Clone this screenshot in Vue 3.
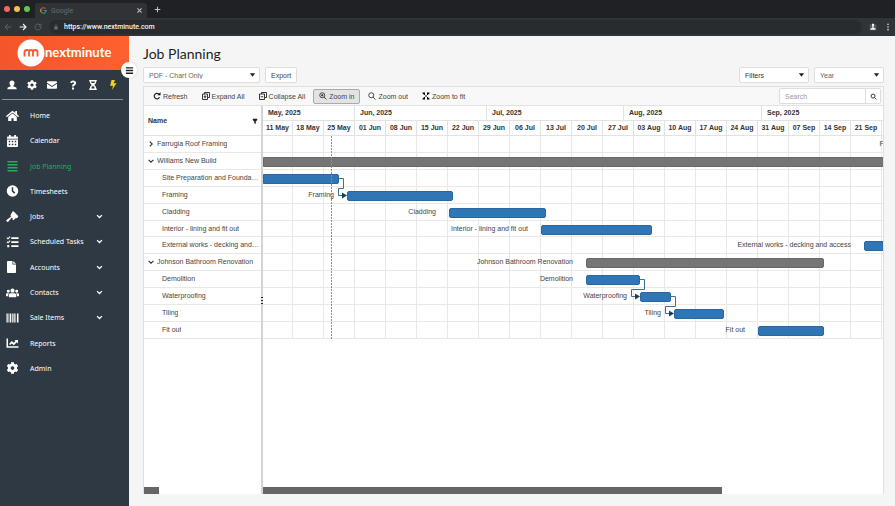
<script setup>
import { ref } from 'vue'

const cog = 'M487.4 315.7l-42.6-24.6c4.3-23.2 4.3-47 0-70.2l42.6-24.6c4.9-2.8 7.1-8.6 5.5-14-11.1-35.6-30-67.8-54.7-94.6-3.8-4.1-10-5.1-14.8-2.3L380.8 110c-17.9-15.4-38.5-27.3-60.8-35.1V25.8c0-5.6-3.9-10.5-9.4-11.7-36.7-8.2-74.3-7.8-109.2 0-5.5 1.2-9.4 6.1-9.4 11.7V75c-22.2 7.9-42.8 19.8-60.8 35.1L88.7 85.5c-4.9-2.8-11-1.9-14.8 2.3-24.7 26.7-43.6 58.9-54.7 94.6-1.7 5.4.6 11.2 5.5 14L67.3 221c-4.3 23.2-4.3 47 0 70.2l-42.6 24.6c-4.9 2.8-7.1 8.6-5.5 14 11.1 35.6 30 67.8 54.7 94.6 3.8 4.1 10 5.1 14.8 2.3l42.6-24.6c17.9 15.4 38.5 27.3 60.8 35.1v49.2c0 5.6 3.9 10.5 9.4 11.7 36.7 8.2 74.3 7.8 109.2 0 5.5-1.2 9.4-6.1 9.4-11.7v-49.2c22.2-7.9 42.8-19.8 60.8-35.1l42.6 24.6c4.9 2.8 11 1.9 14.8-2.3 24.7-26.7 43.6-58.9 54.7-94.6 1.5-5.5-.7-11.3-5.6-14.1zM256 336c-44.1 0-80-35.9-80-80s35.9-80 80-80 80 35.9 80 80-35.9 80-80 80z'

const quick = [
  { label: 'Profile', box: '0 0 24 24', d: 'M12 1c3.600 0 6 2.500 6 6.200 0 2.600-1.200 5.200-3 6.500v1.300l6 2.200c1.500.6 2 1.500 2 3V22H1v-1.800c0-1.500.5-2.400 2-3L9 15v-1.300c-1.800-1.300-3-3.900-3-6.500C6 3.500 8.400 1 12 1z' },
  { label: 'Settings', box: '0 0 512 512', d: cog },
  { label: 'Messages', box: '0 0 24 24', d: 'M2 3h20c1 0 2 .8 2 2v1.500l-12 8-12-8V5c0-1.200 1-2 2-2zM0 9l12 8 12-8v10c0 1.200-1 2-2 2H2c-1 0-2-.8-2-2z' },
  { label: 'Help', box: '0 0 24 24', d: 'M5 6.500C6.500 2.800 9 1 12.300 1c4.200 0 7.200 2.500 7.200 6.200 0 3-1.600 4.500-3.600 5.800-1.400.9-1.700 1.300-1.700 2.700H9.700c-.2-3.300.7-4.700 3-6.200 1.500-1 2-1.400 2-2.400 0-1.200-1-1.900-2.400-1.900-1.500 0-2.400.8-3.500 2.700zM9.500 18h5v5h-5z' },
  { label: 'Pending', box: '0 0 24 24', d: 'M3 0h18v3.500h-1.500c0 4-1.500 6.500-4.500 8.500 3 2 4.500 4.500 4.500 8.500H21V24H3v-3.500h1.500c0-4 1.500-6.500 4.500-8.500-3-2-4.500-4.500-4.500-8.500H3zM7.500 3.500l1 3.500h7l1-3.500zM8 20.500h8C15.500 17 14 15 12 14c-2 1-3.500 3-4 6.500z' },
  { label: 'Shortcuts', box: '0 0 24 24', d: 'M8.500 0h8L14 8h6.500L9.500 24l2.500-10.500H5z', hot: true }
]

const nav = [
  { label: 'Home', box: '0 0 576 512', d: 'M280.37 148.26L96 300.11V464a16 16 0 0 0 16 16l112.06-.29a16 16 0 0 0 15.92-16V368a16 16 0 0 1 16-16h64a16 16 0 0 1 16 16v95.64a16 16 0 0 0 16 16.050L464 480a16 16 0 0 0 16-16V300L295.670 148.260a12.190 12.190 0 0 0-15.300 0zM571.600 251.470L488 182.560V44.050a12 12 0 0 0-12-12h-56a12 12 0 0 0-12 12v72.610L318.470 43a48 48 0 0 0-61 0L4.340 251.470a12 12 0 0 0-1.600 16.900l25.500 31A12 12 0 0 0 45.150 301l235.220-193.740a12.190 12.190 0 0 1 15.300 0L530.900 301a12 12 0 0 0 16.900-1.600l25.500-31a12 12 0 0 0-1.700-16.930z' },
  { label: 'Calendar', box: '0 0 24 24', d: 'M5 0h3.500v3h7V0H19v3h2c1 0 2 1 2 2v2.500H1V5c0-1 1-2 2-2h2zM1 9h22v13c0 1-1 2-2 2H3c-1 0-2-1-2-2zM4.500 11.500v3h3v-3zM10.500 11.500v3h3v-3zM16.500 11.500v3h3v-3zM4.500 17.500v3h3v-3zM10.500 17.500v3h3v-3zM16.500 17.500v3h3v-3z' },
  { label: 'Job Planning', box: '0 0 24 24', d: 'M2 2h20v3H2zM2 8h20v3H2zM2 14h20v3H2zM2 20h20v3H2z', active: true },
  { label: 'Timesheets', box: '0 0 24 24', d: 'M12 .5a11.500 11.500 0 1 0 0 23 11.500 11.500 0 0 0 0-23zM10.500 4.500h3v7l4 3.500-2 2.500-5-4.500z' },
  { label: 'Jobs', box: '0 0 24 24', d: 'M12.500 .5L14.500 1l8.500 8.500.5 2-3 3-2-.5-4.500 4.500-2-1.500.5-2-2-2-7 8.500c-1.500 1.500-5-1.500-3.500-3.500L9.500 11 8 9.500l.5-2.500z', sub: true },
  { label: 'Scheduled Tasks', box: '0 0 24 24', d: 'M9.500 2.500H24v3.500H9.500zM9.500 10.500H24V14H9.500zM9.500 18.500H24V22H9.500zM0 4l1.500-1.500L3 4l3.500-3.500L8 2 3 7zM0 12l1.500-1.500L3 12l3.500-3.500L8 10l-5 5zM1.500 18h4v4.500h-4z', sub: true },
  { label: 'Accounts', box: '0 0 24 24', d: 'M1 1.500C1 .7 1.700 0 2.500 0H12v7h7v15.500c0 .8-.7 1.500-1.500 1.500h-15c-.8 0-1.500-.7-1.500-1.500zM13.500 0l5.500 5.500h-5.500z', sub: true },
  { label: 'Contacts', box: '0 0 28 22', d: 'M14 1.500a4.500 4.500 0 1 1 0 9 4.500 4.500 0 0 1 0-9zM5 4a3.200 3.200 0 1 1 0 6.400A3.200 3.200 0 0 1 5 4zM23 4a3.200 3.200 0 1 1 0 6.400A3.200 3.200 0 0 1 23 4zM9.500 11.500h9c2.200 0 3.500 2 3.500 4V20H6v-4.500c0-2 1.300-4 3.500-4zM2.500 11.500h4C5 13 4.500 14.500 4.500 18H0v-4c0-1.500 1-2.500 2.500-2.500zM25.500 11.500h-4c1.500 1.500 2 3 2 6.500H28v-4c0-1.500-1-2.500-2.500-2.500z', sub: true },
  { label: 'Sale Items', box: '0 0 24 24', d: 'M0 3h2.500v18H0zM4 3h1.200v18H4zM6.500 3h3v18h-3zM11 3h1.500v18H11zM14 3h2.500v18H14zM18 3h1.200v18H18zM21 3h3v18h-3z', sub: true },
  { label: 'Reports', box: '0 0 24 24', d: 'M0 3h3v15.500h21v3H0zM5 14l5.500-6 4 3.500L18 8l-2-2h7v7l-2.500-2.500-6 6-4-3.500L7 16z' },
  { label: 'Admin', box: '0 0 512 512', d: cog }
]

const months = [
  { label: 'May, 2025', width: 92 },
  { label: 'Jun, 2025', width: 132 },
  { label: 'Jul, 2025', width: 137 },
  { label: 'Aug, 2025', width: 138 },
  { label: 'Sep, 2025', width: 136 }
]
const weeks = ['11 May', '18 May', '25 May', '01 Jun', '08 Jun', '15 Jun', '22 Jun', '29 Jun', '06 Jul', '13 Jul', '20 Jul', '27 Jul', '03 Aug', '10 Aug', '17 Aug', '24 Aug', '31 Aug', '07 Sep', '14 Sep', '21 Sep']

// start and width are measured from the left edge of the timeline
const rows = [
  { name: 'Farrugia Roof Framing', group: 'closed', start: 700, width: 200 },
  { name: 'Williams New Build', group: 'open', start: 0, width: 900 },
  { name: 'Site Preparation and Foundations', start: 0, width: 76 },
  { name: 'Framing', start: 84, width: 106, from: 76 },
  { name: 'Cladding', start: 186, width: 97 },
  { name: 'Interior - lining and fit out', start: 278, width: 111 },
  { name: 'External works - decking and access', start: 601, width: 110 },
  { name: 'Johnson Bathroom Renovation', group: 'open', start: 323, width: 238 },
  { name: 'Demolition', start: 323, width: 54 },
  { name: 'Waterproofing', start: 377, width: 31, from: 377 },
  { name: 'Tiling', start: 411, width: 50, from: 408 },
  { name: 'Fit out', start: 495, width: 66 }
]

// elbow line from the end of the previous row's bar to the start of this one
const link = r => `M${r.from} -8.500h4.500v10H${r.start - 8.5}v7h5`
const arrow = r => `M${r.start - 5} 5.500l5 3-5 3z`

const exportType = ref('PDF - Chart Only')
const filter = ref('Filters')
const range = ref('Year')
const search = ref('')
const url = ref('https://www.nextminute.com')
</script>

<template>
  <div class="window">
    <header class="browser">
      <div class="tabs">
        <div class="lights"><i class="red"></i><i class="yellow"></i><i class="green"></i></div>
        <div class="tab">
          <svg class="g" viewBox="0 0 24 24" fill="none" stroke-width="4">
            <path d="M19 5.500A9.500 9.500 0 0 0 4 7.200" stroke="#d9473a" />
            <path d="M4 7.200a9.500 9.500 0 0 0 0 9.600" stroke="#dba51c" />
            <path d="M4 16.800a9.500 9.500 0 0 0 14.500 2" stroke="#37964c" />
            <path d="M18.500 18.800c2-1.800 3-4 3-6.800H12" stroke="#4478d8" />
          </svg>
          <span>Google</span>
          <button class="plain close" aria-label="Close tab"><svg viewBox="0 0 10 10"><path d="M2 2l6 6M8 2l-6 6" stroke="#b9bbbe" stroke-width="1.500" /></svg></button>
        </div>
        <button class="plain add" aria-label="New tab"><svg viewBox="0 0 10 10"><path d="M5 1v8M1 5h8" stroke="#c3c5c8" stroke-width="1.500" /></svg></button>
      </div>
      <div class="address">
        <button class="plain" aria-label="Back"><svg viewBox="0 0 12 12" fill="none" stroke="#62666a" stroke-width="1.400"><path d="M11 6H2M6 1.500L1.500 6 6 10.500" /></svg></button>
        <button class="plain" aria-label="Forward"><svg viewBox="0 0 12 12" fill="none" stroke="#f1f2f3" stroke-width="1.700"><path d="M1 6h9M6 1.500l4.500 4.500L6 10.500" /></svg></button>
        <button class="plain" aria-label="Reload"><svg viewBox="0 0 12 12" fill="none" stroke="#62666a" stroke-width="1.400"><path d="M10.500 6A4.500 4.500 0 1 1 9 2.700M10.500 1v3.500H7" /></svg></button>
        <div class="omnibox">
          <svg viewBox="0 0 12 12"><path d="M2.500 5h7v6h-7z" fill="#696d70" /><path d="M4 5V3.500a2 2 0 0 1 4 0V5" fill="none" stroke="#696d70" stroke-width="1.200" /></svg>
          <input v-model="url" aria-label="Address" />
        </div>
        <button class="plain" aria-label="Account"><svg viewBox="0 0 12 12"><path d="M1 2h10v9H1z" fill="#55595c" /><path d="M4.500 1h3v3.500H7V7l3 1.500V10H2V8.500L5 7V4.500h-.5z" fill="#f2f2f2" /></svg></button>
        <button class="plain" aria-label="Browser menu"><svg viewBox="0 0 12 12" fill="#d8d9da"><circle cx="6" cy="2" r="1.200" /><circle cx="6" cy="6" r="1.200" /><circle cx="6" cy="10" r="1.200" /></svg></button>
      </div>
    </header>

    <div class="body">
      <aside class="sidebar">
        <a class="brand" href="#">
          <svg viewBox="0 0 28 28">
            <circle cx="14" cy="14" r="13.500" fill="#fff" />
            <path d="M7.500 17.500v-4q0-2.500 2.500-2.500h1.500M12 17.500V13q0-2 2-2t2 2v4.500M16 13q0-2 2.200-2t2.300 2v4.500" fill="none" stroke="#f8592b" stroke-width="1.800" />
          </svg>
          <span>nextminute</span>
        </a>
        <div class="quick">
          <button v-for="q in quick" :key="q.label" class="plain" :class="{ hot: q.hot }" :aria-label="q.label">
            <svg :viewBox="q.box"><path :d="q.d" fill="currentColor" fill-rule="evenodd" /></svg>
          </button>
        </div>
        <nav>
          <a v-for="n in nav" :key="n.label" href="#" :class="{ active: n.active }">
            <svg class="icon" :viewBox="n.box"><path :d="n.d" fill="currentColor" fill-rule="evenodd" /></svg>
            <span>{{ n.label }}</span>
            <svg v-if="n.sub" class="chev" viewBox="0 0 10 10"><path d="M1.500 3L5 6.500 8.500 3" fill="none" stroke="currentColor" stroke-width="1.800" /></svg>
          </a>
        </nav>
        <button class="plain toggle" aria-label="Toggle menu"><svg viewBox="0 0 10 10"><path d="M1 2h8M1 5h8M1 8h8" stroke="#222" stroke-width="1.500" /></svg></button>
      </aside>

      <main>
        <h1>Job Planning</h1>
        <div class="controls">
          <div class="select wide">
            <select v-model="exportType" aria-label="Export type"><option>PDF - Chart Only</option></select>
            <svg viewBox="0 0 8 8"><path d="M1 2h6L4 6z" /></svg>
          </div>
          <button class="export">Export</button>
          <div class="select push dark">
            <select v-model="filter" aria-label="Filters"><option>Filters</option></select>
            <svg viewBox="0 0 8 8"><path d="M1 2h6L4 6z" /></svg>
          </div>
          <div class="select">
            <select v-model="range" aria-label="Range"><option>Year</option></select>
            <svg viewBox="0 0 8 8"><path d="M1 2h6L4 6z" /></svg>
          </div>
        </div>

        <section class="panel">
          <div class="toolbar">
            <button><svg viewBox="0 0 16 16"><path d="M13 10.500A5.500 5.500 0 1 1 11.500 4" fill="none" stroke="currentColor" stroke-width="2.400" /><path d="M9 6.500h6V.5z" /></svg>Refresh</button>
            <button><svg viewBox="0 0 16 16" fill="none" stroke="currentColor" stroke-width="1.800"><path d="M5 4V1h10v10h-3M1 4h10v11H1zM6 6.500v6M3.500 9.500h5" /></svg>Expand All</button>
            <button><svg viewBox="0 0 16 16" fill="none" stroke="currentColor" stroke-width="1.800"><path d="M5 4V1h10v10h-3M1 4h10v11H1zM3.500 9.500h5" /></svg>Collapse All</button>
            <button class="on"><svg viewBox="0 0 16 16" fill="none" stroke="currentColor" stroke-width="1.600"><circle cx="6.500" cy="6.500" r="5" /><path d="M10 10l5 5M4 6.500h5M6.500 4v5" /></svg>Zoom in</button>
            <button><svg viewBox="0 0 16 16" fill="none" stroke="currentColor" stroke-width="1.600"><circle cx="6.500" cy="6.500" r="5" /><path d="M10 10l5 5" /></svg>Zoom out</button>
            <button><svg viewBox="0 0 16 16"><path d="M1 1h5v5H4.500L1 2.500zM15 1h-5v5h1.500L15 2.500zM1 15h5v-5H4.500L1 13.500zM15 15h-5v-5h1.500l3.500 3.500z" /><path d="M5 5l6 6M11 5l-6 6" stroke="currentColor" stroke-width="1.200" /></svg>Zoom to fit</button>
            <div class="search">
              <input v-model="search" type="text" placeholder="Search" aria-label="Search" />
              <button aria-label="Run search"><svg viewBox="0 0 16 16" fill="none" stroke="currentColor" stroke-width="2"><circle cx="7" cy="7" r="4.500" /><path d="M10.500 10.500l4 4" /></svg></button>
            </div>
          </div>

          <div class="gantt">
            <div class="tree">
              <div class="treehead">
                <span>Name</span>
                <svg viewBox="0 0 8 8"><path d="M1 1h6v1.500L5 4.500V8L3 7V4.500L1 2.500z" /></svg>
              </div>
              <div class="rows">
                <div v-for="r in rows" :key="r.name" class="row" :class="{ child: !r.group }">
                  <svg v-if="r.group" viewBox="0 0 10 10" fill="none" stroke="#333" stroke-width="1.400"><path :d="r.group === 'open' ? 'M2 3.500l3 3 3-3' : 'M3.500 2l3 3-3 3'" /></svg>
                  <span>{{ r.name }}</span>
                </div>
              </div>
              <div class="scroll"><i class="short"></i></div>
            </div>
            <div class="splitter"><i></i></div>
            <div class="chart">
              <div class="months"><span v-for="m in months" :key="m.label" :style="{ width: m.width + 'px' }">{{ m.label }}</span></div>
              <div class="weeks"><span v-for="w in weeks" :key="w">{{ w }}</span></div>
              <div class="rows lanes">
                <div v-for="r in rows" :key="r.name" class="lane">
                  <span v-if="r.start" class="label" :style="{ width: r.start - 13 + 'px' }">{{ r.name }}</span>
                  <i class="bar" :class="{ summary: r.group, first: !r.start }" :style="{ left: r.start + 'px', width: r.width + 'px' }"></i>
                  <svg v-if="r.from" class="link"><path :d="link(r)" fill="none" stroke="#3c7191" /><path :d="arrow(r)" fill="#163f5e" /></svg>
                </div>
                <i class="today"></i>
              </div>
              <div class="scroll"><i class="long"></i></div>
            </div>
          </div>
        </section>
      </main>
    </div>
  </div>
</template>

<style>
body { margin: 0; background: #f5f5f5; }
</style>

<style scoped>
* { box-sizing: border-box; }
.window { min-height: 100vh; display: flex; flex-direction: column; font-family: "Liberation Sans", Arial, sans-serif; font-size: 7px; color: #444; overflow: hidden; }
button, input, select { font: inherit; color: inherit; margin: 0; padding: 0; outline: 0; }
svg { display: block; flex: none; }
.plain { border: 0; background: none; display: flex; align-items: center; justify-content: center; }

.browser { font-family: Roboto, sans-serif; }
.tabs { height: 18px; background: #202124; display: flex; align-items: stretch; }
.lights { width: 35px; display: flex; align-items: center; gap: 4px; padding-left: 4px; }
.lights i { width: 6px; height: 6px; border-radius: 50%; }
.red { background: #ed6a5e; }
.yellow { background: #f4bf4f; }
.green { background: #61c554; }
.tab { width: 112px; margin-top: 3px; padding: 0 4px 0 5px; background: #303336; border-radius: 3px 3px 0 0; display: flex; align-items: center; gap: 4px; color: #676a6e; }
.g { width: 7px; height: 7px; }
.close { margin-left: auto; }
.close svg { width: 7px; height: 7px; }
.add { width: 20px; }
.add svg { width: 7px; height: 7px; }
.address { height: 18px; background: #303437; display: flex; align-items: center; gap: 7px; padding: 0 3px 0 4px; }
.address svg { width: 8px; height: 8px; }
.omnibox { flex: 1; height: 14px; padding-left: 4px; border-radius: 7px; background: #282c2f; display: flex; align-items: center; gap: 5px; }
.omnibox svg { width: 6px; height: 6px; }
.omnibox input { flex: 1; border: 0; background: none; color: #f4f4f4; font-weight: 500; }

.body { flex: 1; display: flex; }
.sidebar { position: relative; width: 129px; flex: none; background: #2f3944; color: #fff; font-family: "Noto Sans", sans-serif; }
.brand { height: 34px; padding-left: 17px; background: linear-gradient(90deg, #f5552a, #ff6030); color: #fff; text-decoration: none; display: flex; align-items: center; font: 700 13px Lato, sans-serif; }
.brand svg { width: 28px; height: 28px; }
.brand span { padding-bottom: 2px; }
.quick { height: 30px; margin: 0 6px 0 2px; border-bottom: 1px solid #8b949d; display: grid; grid-template-columns: repeat(6, 1fr); }
.quick svg { width: 10px; height: 10px; }
.quick .hot { color: #f7cf1d; }
nav { margin-top: 3px; min-height: 278px; display: grid; grid-auto-rows: 1fr; }
nav a { display: flex; align-items: center; padding: 0 26px 0 6px; color: #fff; text-decoration: none; }
nav .active { color: #1fb253; }
.icon { width: 13px; height: 12px; margin-right: 11px; }
.chev { width: 7px; height: 7px; margin-left: auto; }
.toggle { position: absolute; right: -8px; top: 26px; width: 16px; height: 16px; border-radius: 50%; background: #fff; box-shadow: 0 0 2px #0003; }
.toggle svg { width: 9px; height: 9px; }

main { flex: 1; min-width: 0; display: flex; flex-direction: column; padding: 9px 11px 12px 14px; background: #f5f5f5; }
h1 { margin: 0; font: 400 14px/18px Lato, sans-serif; color: #1f1f1f; }
.controls { display: flex; align-items: center; gap: 5px; padding: 4px 0 3px; }
.select { position: relative; width: 70px; height: 16px; color: #666; }
.select.wide { width: 117px; }
.select.push { margin-left: auto; }
.select.dark { color: #333; }
.select select { appearance: none; width: 100%; height: 100%; padding: 0 5px; border: 1px solid #ddd; border-radius: 2px; background: #fff; }
.select svg { position: absolute; right: 4px; top: 4px; width: 7px; height: 8px; fill: #222; pointer-events: none; }
.export { height: 16px; padding: 0 5px; border: 1px solid #ddd; border-radius: 2px; background: #fff; }

.panel { flex: 1; display: flex; flex-direction: column; border: 1px solid #e0e0e0; border-bottom: 0; }
.toolbar { height: 19px; padding: 1px 2px 1px 3px; display: flex; align-items: center; gap: 2px; background: #f8f8f8; border-bottom: 1px solid #e2e2e2; }
.toolbar > button { height: 15px; padding: 0 5px; border: 1px solid transparent; border-radius: 2px; background: none; display: flex; align-items: center; gap: 2px; white-space: nowrap; }
.toolbar svg { width: 8px; height: 8px; color: #222; }
.toolbar > .on { background: #e3e3e3; border-color: #aaa; }
.search { margin-left: auto; width: 102px; height: 16px; display: flex; border: 1px solid #ddd; border-radius: 2px; background: #fff; }
.search input { flex: 1; min-width: 0; border: 0; padding: 0 5px; background: none; }
.search input::placeholder { color: #999; opacity: 1; }
.search button { width: 15px; border: 0; border-left: 1px solid #ddd; background: none; display: flex; align-items: center; justify-content: center; }
.search svg { width: 7px; height: 7px; }

.gantt { flex: 1; display: flex; background: #fff; }
.tree { width: 117px; flex: none; display: flex; flex-direction: column; }
.treehead { height: 30px; padding: 0 3px 0 4px; border-bottom: 1px solid #e2e2e2; display: flex; align-items: center; justify-content: space-between; font-weight: 700; color: #333; }
.treehead svg { width: 6px; height: 6px; fill: #222; }
.rows { height: 203px; display: grid; grid-template-rows: repeat(12, 1fr); line-height: 12px; }
.row { display: flex; align-items: center; gap: 2px; min-width: 0; min-height: 0; padding: 0 1px 0 3px; border-bottom: 1px solid #e8e8e8; }
.row.child { padding-left: 18px; }
.row svg { width: 8px; height: 8px; }
.row span { overflow: hidden; text-overflow: ellipsis; white-space: nowrap; }
.splitter { width: 2px; flex: none; background: #d4d4d4; display: flex; align-items: center; }
.splitter i { width: 2px; height: 7px; background: repeating-linear-gradient(#222 0 1px, #ddd 1px 3px); }
.chart { flex: 1; min-width: 0; overflow: hidden; display: flex; flex-direction: column; }
.months, .weeks { height: 15px; flex: none; display: flex; border-bottom: 1px solid #e2e2e2; font-weight: 700; color: #333; }
.months span, .weeks span { flex: none; line-height: 14px; border-right: 1px solid #e2e2e2; white-space: nowrap; }
.months span { padding-left: 5px; }
.weeks span { width: 31px; text-align: center; }
.weeks span:first-child { width: 30px; }
.lanes { position: relative; background: repeating-linear-gradient(90deg, transparent 0 30px, #e8e8e8 30px 31px) -1px 0 / 1200px 100%; }
.lane { position: relative; min-height: 0; display: flex; align-items: center; border-bottom: 1px solid #e8e8e8; }
.label { flex: none; text-align: right; white-space: nowrap; }
.bar { position: absolute; top: 4px; height: 10px; border-radius: 2px; background: #2e76b6; border: 1px solid #28689f; }
.bar.summary { background: #757575; border-color: #686868; }
.bar.first { border-top-left-radius: 0; border-bottom-left-radius: 0; }
.link { position: absolute; left: 0; top: 0; width: 100%; height: 100%; overflow: visible; }
.today { position: absolute; left: 68px; top: 0; bottom: 0; width: 1px; background: repeating-linear-gradient(#5f9fb4 0 2px, #fff0 2px 3px); }
.scroll { margin-top: auto; height: 7px; }
.scroll i { display: block; height: 7px; background: #666; }
.short { width: 15px; }
.long { width: 74%; }
</style>
